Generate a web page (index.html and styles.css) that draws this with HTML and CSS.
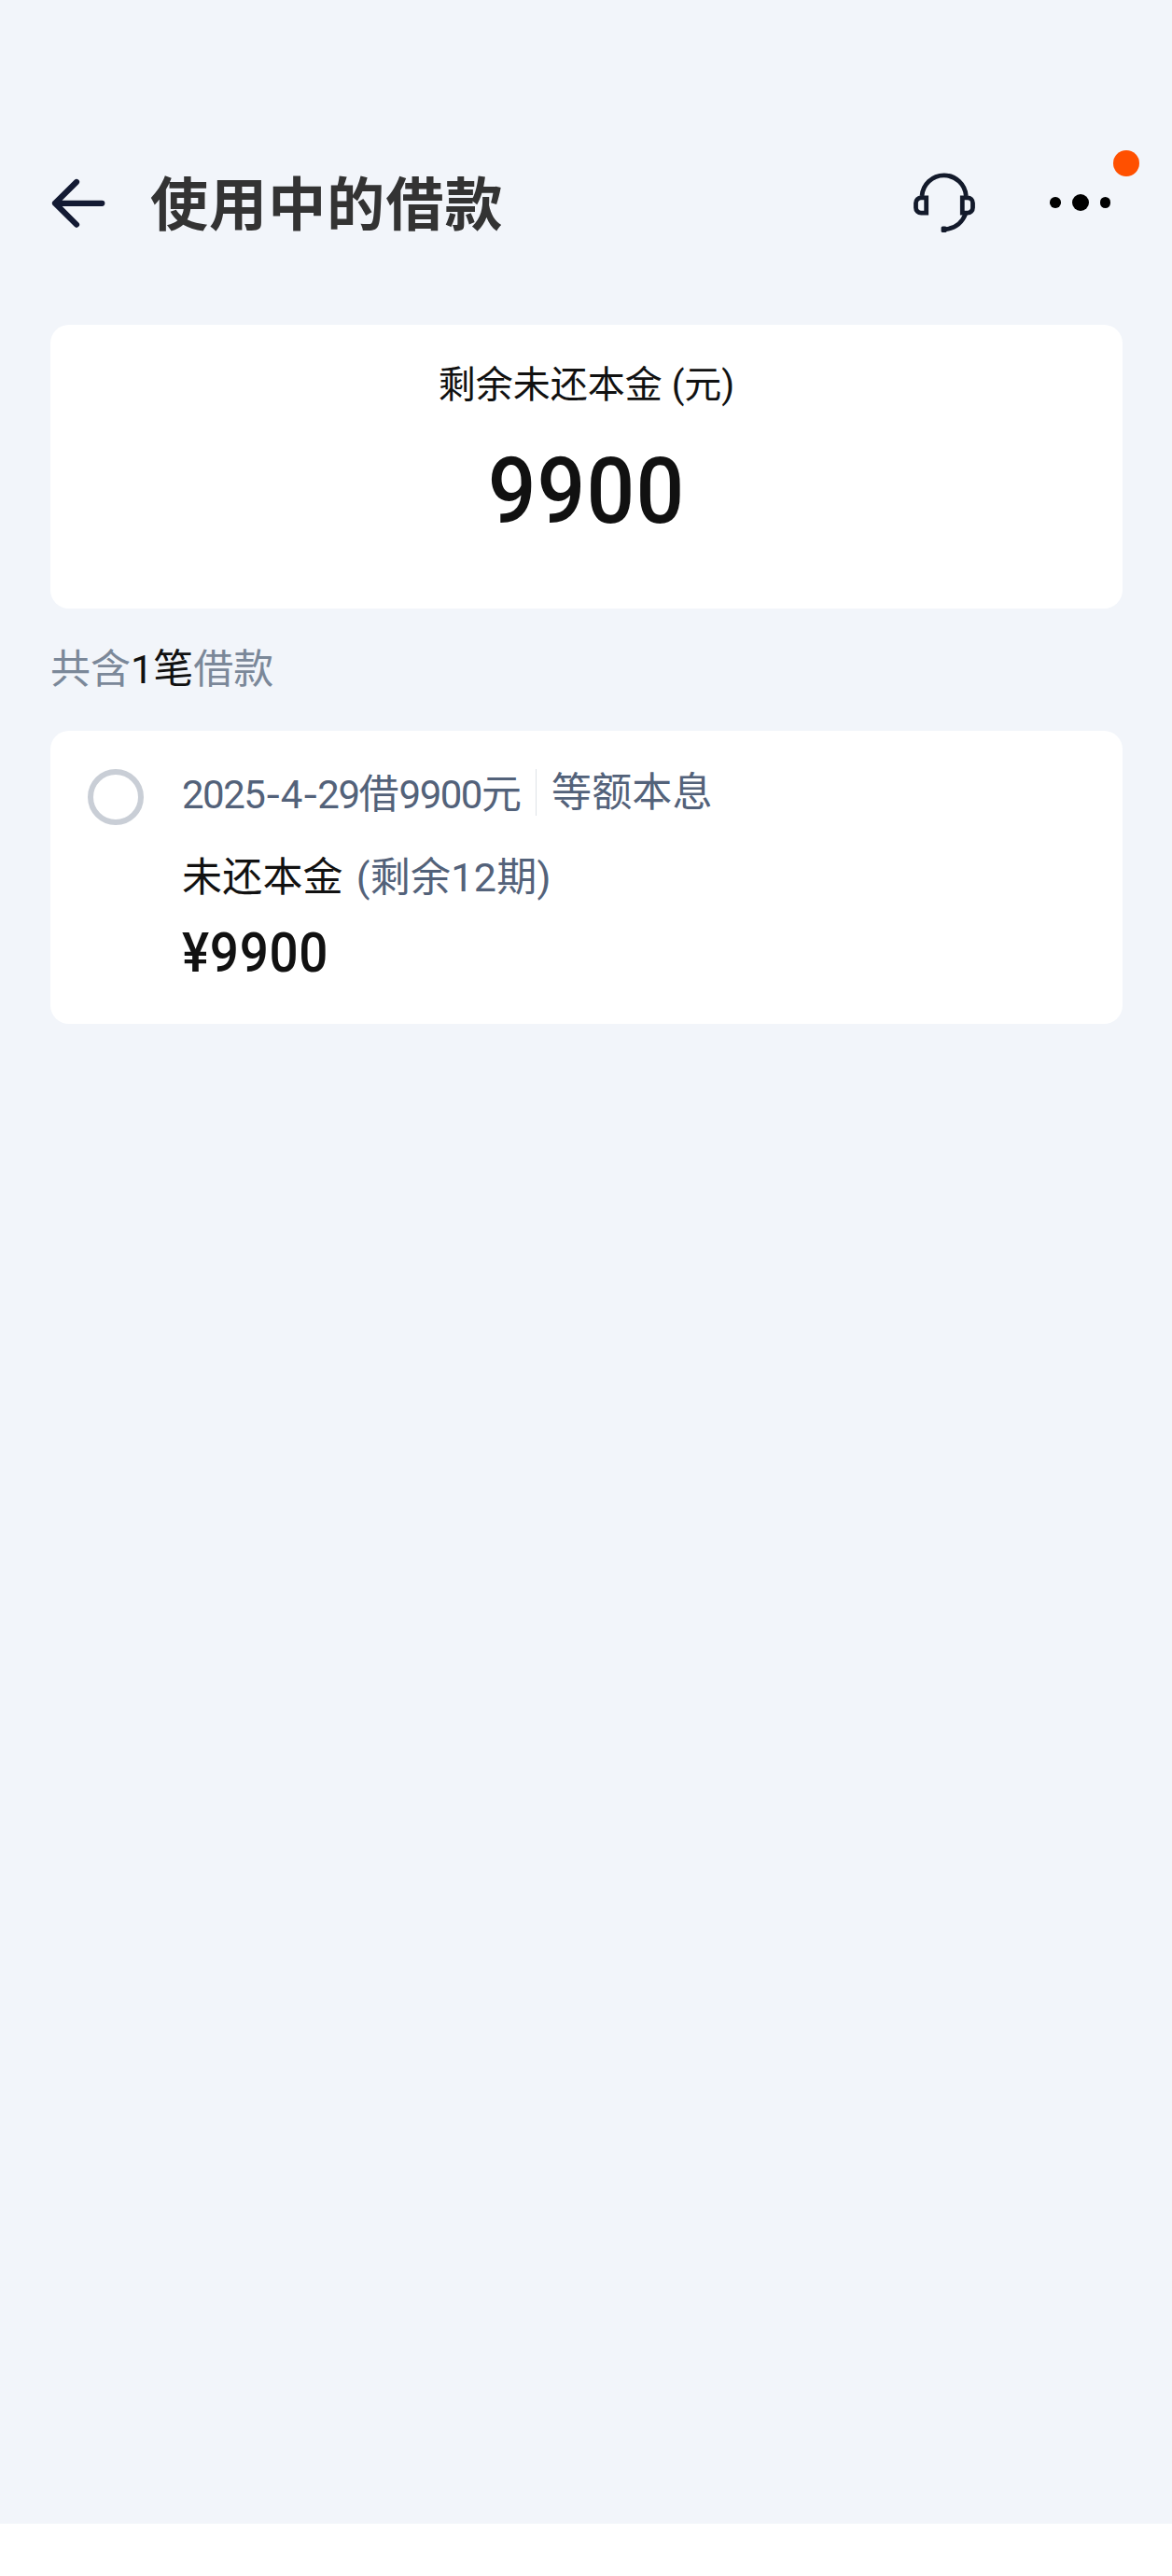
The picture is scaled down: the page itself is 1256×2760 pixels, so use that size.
FILE: index.html
```
<!DOCTYPE html>
<html lang="zh-CN">
<head>
  <meta charset="UTF-8">
  <title>使用中的借款</title>
  <meta name="viewport" content="width=device-width, initial-scale=1">
  <link rel="stylesheet" href="styles.css">
</head>
<body>

  <div class="page">
    <header class="navbar">
      <svg class="back" viewBox="0 0 60 60">
        <path d="M28 7 5 29.8 28 52.6M5 29.8H55.3" />
      </svg>
      <h1>使用中的借款</h1>
      <svg class="service" viewBox="0 0 72 72">
        <path d="M12 29a23.7 23.7 0 0 1 47.3 0" />
        <path d="M16.7 30.9h-5.5a5.7 5.7 0 0 0-5.7 5.7v4.8a5.7 5.7 0 0 0 5.7 5.7h5.5z" />
        <path d="M55.3 30.9h5.5a5.7 5.7 0 0 1 5.7 5.7v4.8a5.7 5.7 0 0 1-5.7 5.7h-5.5z" />
        <path d="M58.8 48C55 58 48 63.5 37 64.7" />
        <rect x="32.6" y="61.4" width="6" height="6.6" rx="1.6" />
      </svg>
      <div class="more">
        <i class="dot"></i>
        <i class="dot big"></i>
        <i class="dot"></i>
        <span class="badge"></span>
      </div>
    </header>

    <section class="card summary">
      <div class="label">剩余未还本金 (元)</div>
      <div class="total">9900</div>
    </section>

    <p class="count">共含<b>1笔</b>借款</p>

    <section class="card loan">
      <span class="radio"></span>
      <div class="info">
        <div class="meta">
          <span class="date"><span class="num">2025<i>-</i>4<i>-</i>29</span>借<span class="num">9900</span>元</span>
          <span class="type">等额本息</span>
        </div>
        <div class="rest">未还本金 <span>(剩余12期)</span></div>
        <div class="amount">¥9900</div>
      </div>
    </section>
  </div>

</body>
</html>
```

FILE: styles.css
```
body {
  margin: 0;
  background: #fff;
  font-family: Roboto, "Noto Sans CJK SC", sans-serif;
  color: #111;
}

.page {
  box-sizing: border-box;
  height: 2704px;
  padding: 168px 53px 0 54px;
  background: #f2f5fa;
}

.navbar {
  display: flex;
  align-items: center;
  height: 100px;
  margin-bottom: 80px;
}

.back {
  width: 60px;
  height: 60px;
  fill: none;
  stroke: #131a33;
  stroke-width: 6.2;
  stroke-linecap: round;
  stroke-linejoin: round;
}

h1 {
  flex: 1;
  margin: 0 0 0 47px;
  padding-top: 5px;
  font-size: 62px;
  line-height: 90px;
  letter-spacing: 1.1px;
  font-weight: 700;
  color: #333;
}

.service {
  width: 72px;
  height: 72px;
  margin-right: 77px;
  margin-bottom: 3px;
  fill: none;
  stroke: #131a2b;
  stroke-width: 4.8;
}

.service rect {
  fill: #131a2b;
  stroke: none;
}

.more {
  position: relative;
  display: flex;
  align-items: center;
  gap: 12px;
  margin-right: 13px;
  margin-bottom: 2px;
}

.dot {
  width: 11.5px;
  height: 11.5px;
  border-radius: 50%;
  background: #000;
}

.dot.big {
  width: 18px;
  height: 18px;
}

.badge {
  position: absolute;
  right: -31px;
  top: -47px;
  width: 28px;
  height: 28px;
  border-radius: 50%;
  background: #ff5000;
}

.card {
  box-sizing: border-box;
  border-radius: 20px;
  background: #fff;
}

.summary {
  height: 304px;
  padding-top: 36px;
  text-align: center;
}

.label {
  font-size: 40px;
  line-height: 58px;
}

.total {
  margin-top: 25px;
  font-size: 98px;
  line-height: 120px;
  font-weight: 500;
  letter-spacing: 1.2px;
  transform: scaleX(0.93);
}

.count {
  margin: 0;
  font-size: 43px;
  line-height: 131px;
  color: #7b8899;
}

.count b {
  font-weight: 400;
  color: #111;
}

.loan {
  display: flex;
  height: 314px;
  padding: 41px 40px 0;
}

.radio {
  box-sizing: border-box;
  width: 60px;
  height: 60px;
  border: 6px solid #c9ced6;
  border-radius: 50%;
}

.info {
  margin-left: 41px;
}

.meta {
  display: flex;
  align-items: center;
  height: 50px;
  font-size: 43px;
  color: #53627a;
}

.date {
  margin-top: -5px;
}

.num {
  font-size: 42px;
  letter-spacing: -1.5px;
}

.num i {
  display: inline-block;
  width: 17.4px;
  font-style: normal;
  text-align: center;
  transform: scaleX(1.2);
}

.type {
  margin-left: 15px;
  padding-left: 16px;
  border-left: 1px solid #dfe3e8;
  line-height: 50px;
  letter-spacing: 0.2px;
}

.rest {
  margin-top: 36px;
  font-size: 43px;
  line-height: 60px;
  letter-spacing: 0.2px;
}

.rest span {
  margin-left: 3px;
  letter-spacing: 0.3px;
  color: #53627a;
}

.amount {
  margin-top: 16px;
  font-size: 59px;
  line-height: 70px;
  font-weight: 500;
  letter-spacing: 0.7px;
  transform: scaleX(0.93);
  transform-origin: left;
}
```
